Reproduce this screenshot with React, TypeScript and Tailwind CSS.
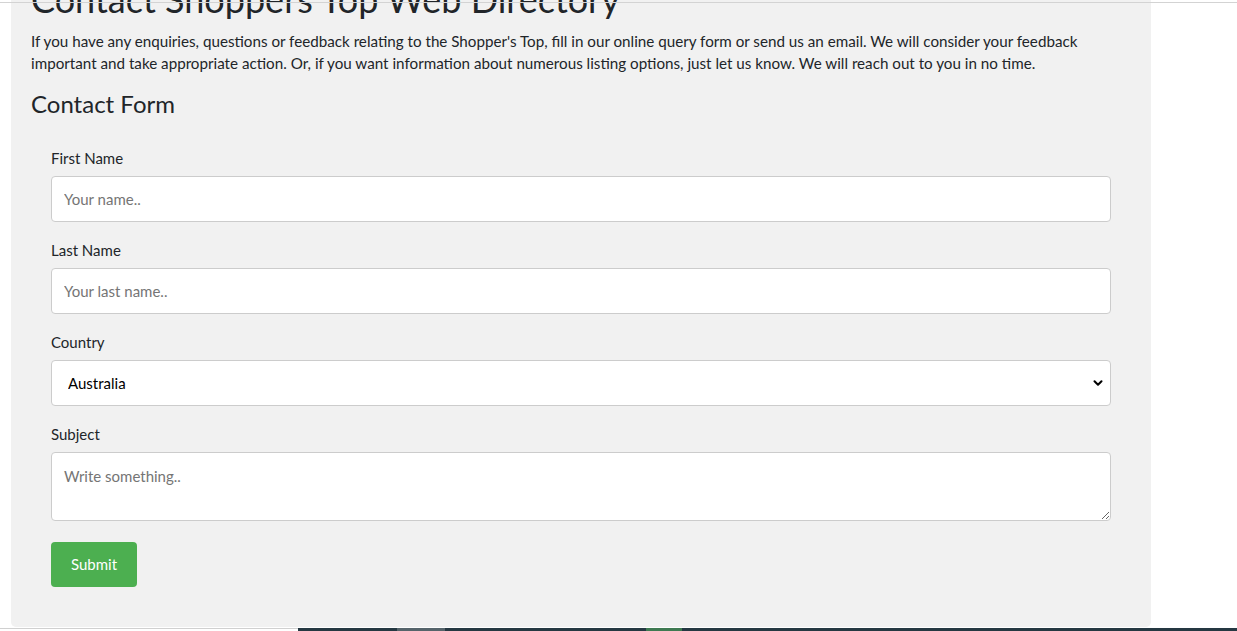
import { ChevronDown } from "lucide-react";

const FONT = { fontFamily: "Lato, 'Open Sans', sans-serif" };

const fieldBox =
  "block w-full h-[46px] mt-[7px] mb-[17px] rounded-[4px] border border-[#cccccc] bg-white px-3 text-[15px] text-[#212529] placeholder:text-[#757575] outline-none";

function Label({ children }: { children: string }) {
  return <label className="block h-[22px] leading-[22px] text-[15px] text-[#212529]">{children}</label>;
}

export default function App() {
  return (
    <div className="relative h-[631px] overflow-hidden bg-white" style={FONT}>
      {/* fixed header edge */}
      <div className="absolute left-0 right-0 top-[2px] z-10 h-px bg-[#d3d3d3]" />

      <div className="ml-[11px] w-[1140px] rounded-b-[5px] bg-[#f1f1f1] px-5 pb-10">
        <h1 className="-mt-[22px] text-[36px] leading-[1.2] font-normal text-[#212529]">
          Contact Shoppers Top Web Directory
        </h1>
        <p className="mt-[9px] mb-4 text-[15.2px] leading-[22px] text-[#212529]">
          If you have any enquiries, questions or feedback relating to the Shopper's Top, fill in our online query
          form or send us an email. We will consider your feedback important and take appropriate action. Or, if you
          want information about numerous listing options, just let us know. We will reach out to you in no time.
        </p>
        <h2 className="text-[24px] leading-[1.2] font-normal text-[#212529]">Contact Form</h2>

        <form className="px-5 pt-[28px]" onSubmit={(e) => e.preventDefault()}>
          <Label>First Name</Label>
          <input className={fieldBox} placeholder="Your name.." />

          <Label>Last Name</Label>
          <input className={fieldBox} placeholder="Your last name.." />

          <Label>Country</Label>
          <div className="relative">
            <select className={`${fieldBox} appearance-none pl-4 text-black`} defaultValue="australia">
              <option value="australia">Australia</option>
              <option value="canada">Canada</option>
              <option value="usa">USA</option>
            </select>
            <ChevronDown
              className="pointer-events-none absolute right-[6px] top-[16px] h-[14px] w-[14px] text-black"
              strokeWidth={3.5}
            />
          </div>

          <Label>Subject</Label>
          <textarea
            className="block w-full h-[69px] mt-[7px] rounded-[4px] border border-[#cccccc] bg-white px-3 py-[12px] text-[15px] leading-[22px] text-[#212529] placeholder:text-[#757575] outline-none resize-y"
            placeholder="Write something.."
          />

          <button
            type="submit"
            className="mt-[21px] h-[45px] w-[86px] rounded-[4px] bg-[#4caf50] text-[15px] text-white"
          >
            Submit
          </button>
        </form>
      </div>

      {/* fixed bottom bar edge */}
      <div className="absolute bottom-0 left-0 right-0 z-10 flex h-[3px]">
        <div className="w-[298px] border-t border-[#d0d0d0] bg-white" />
        <div className="flex flex-1 bg-[#253842]">
          <div className="ml-[99px] w-[48px] bg-[#56646b]" />
          <div className="ml-[201px] w-[36px] bg-[#3f7a52]" />
        </div>
      </div>
    </div>
  );
}
